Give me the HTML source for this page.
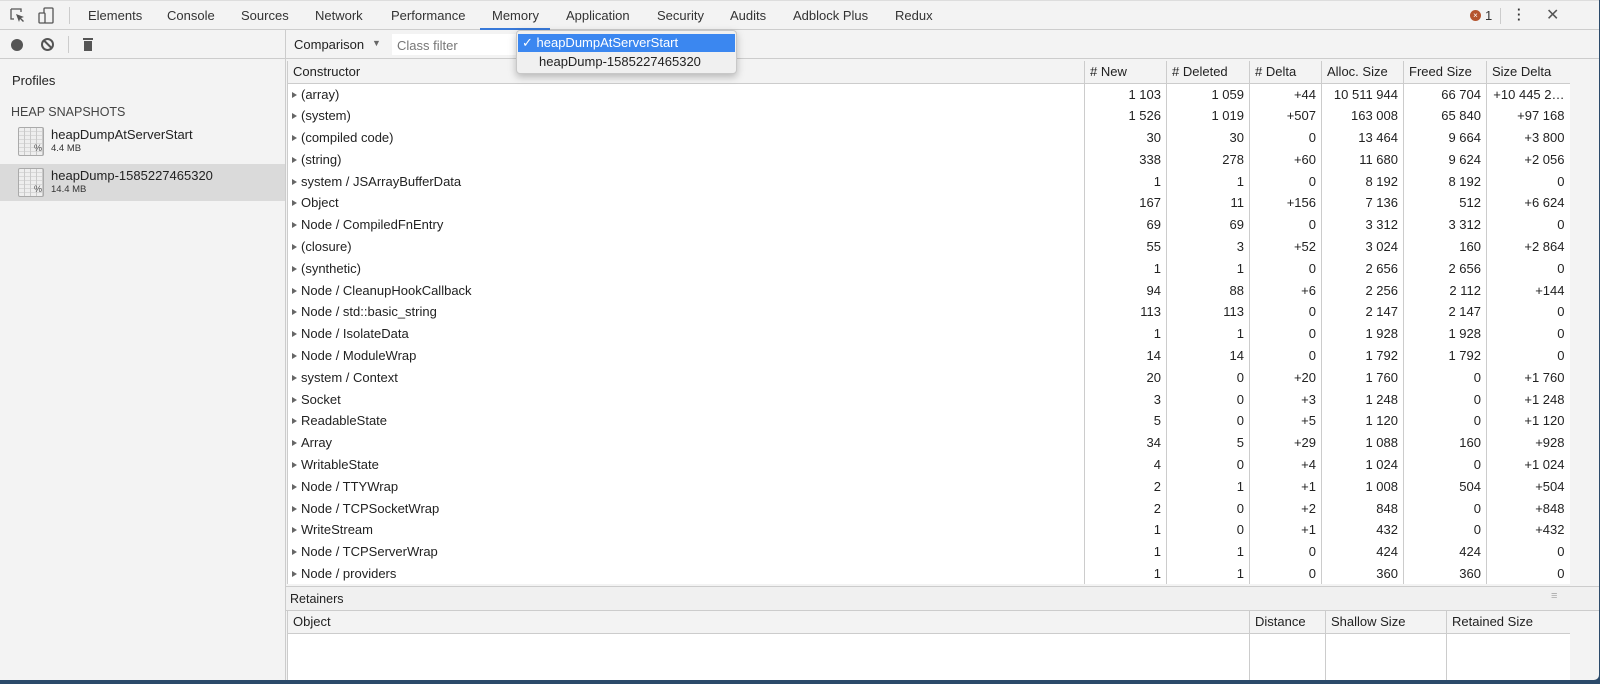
<!DOCTYPE html>
<html><head><style>
*{box-sizing:border-box;margin:0;padding:0}
body{width:1600px;height:684px;background:#2b4a6a;font-family:"Liberation Sans",sans-serif;font-size:13px;color:#222;position:relative;overflow:hidden}
.win{position:absolute;left:0;top:0;width:1599px;height:680px;background:#f3f3f3;border-bottom-right-radius:5px;overflow:hidden}
.tb{position:absolute;left:0;top:0;width:100%;height:30px;background:#f3f3f3;border-bottom:1px solid #cdcdcd;border-top:1px solid #ddd}
.tab{position:absolute;top:7px;font-size:13px;color:#333}
.sb{position:absolute;left:0;top:30px;width:286px;height:650px;background:#f3f3f3;border-right:1px solid #ccc}
.t2{position:absolute;left:0;top:0;width:286px;height:29px;border-bottom:1px solid #ccc}
.main{position:absolute;left:286px;top:30px;width:1313px;height:650px}
table{border-collapse:collapse;table-layout:fixed;position:absolute;left:1px;background:#fff}
td,th{border-left:1px solid #ccc;padding:0 5px;white-space:nowrap;overflow:hidden;font-weight:normal;font-size:13px}
th{background:#f3f3f3;text-align:left;height:22px;border-bottom:1px solid #ccc}
td{height:21.8px;text-align:right}
td:first-child{text-align:left;padding-left:4px}
.tri{display:inline-block;width:0;height:0;border-left:5px solid #666;border-top:3.5px solid transparent;border-bottom:3.5px solid transparent;margin-right:4px;vertical-align:1px}
.ic{position:absolute;left:18px;width:26px;height:29px;background:repeating-linear-gradient(90deg,transparent 0 5px,#c9c9c9 5px 6px),repeating-linear-gradient(0deg,#eee 0 3px,#d8d8d8 3px 4px);border:1px solid #aaa;border-radius:2px;font-size:9px;color:#555;text-align:right;padding:15px 1px 0 0}
</style></head><body>
<div class="win">
<div class="tb">
<svg style="position:absolute;left:10px;top:7px" width="16" height="16"><path d="M1 1h10v3M1 1v10h3" stroke="#555" fill="none" stroke-width="1.3"/><path d="M6 6l8 3-3 1 3 3-1 1-3-3-1 3z" fill="#555"/></svg>
<svg style="position:absolute;left:38px;top:6px" width="18" height="18"><rect x="6" y="1" width="9" height="15" rx="1" stroke="#555" fill="none" stroke-width="1.3"/><rect x="1" y="6" width="6" height="10" rx="1" stroke="#555" fill="#f3f3f3" stroke-width="1.3"/></svg>
<div style="position:absolute;left:69px;top:6px;width:1px;height:17px;background:#ccc"></div>
<span class="tab" style="left:88px">Elements</span><span class="tab" style="left:167px">Console</span><span class="tab" style="left:241px">Sources</span><span class="tab" style="left:315px">Network</span><span class="tab" style="left:391px">Performance</span><span class="tab" style="left:492px">Memory</span><span class="tab" style="left:566px">Application</span><span class="tab" style="left:657px">Security</span><span class="tab" style="left:730px">Audits</span><span class="tab" style="left:793px">Adblock Plus</span><span class="tab" style="left:895px">Redux</span>
<div style="position:absolute;left:480px;top:27px;width:70px;height:2px;background:#3879d9"></div>
<div style="position:absolute;left:1470px;top:9px;width:11px;height:11px;border-radius:50%;background:#b5552f;color:#fff;font-size:8px;text-align:center;line-height:11px">×</div>
<span class="tab" style="left:1485px">1</span>
<div style="position:absolute;left:1500px;top:7px;width:1px;height:16px;background:#ccc"></div>
<span class="tab" style="left:1517px;font-weight:bold;line-height:5px;top:6px">·<br>·<br>·</span>
<span class="tab" style="left:1546px;font-size:16px;top:4px;color:#555">✕</span>
</div>
<div class="sb">
<div class="t2">
<div style="position:absolute;left:11px;top:9px;width:12px;height:12px;border-radius:50%;background:#555"></div>
<div style="position:absolute;left:41px;top:8px;width:13px;height:13px;border-radius:50%;border:2px solid #555"><div style="position:absolute;left:3.5px;top:-1px;width:2px;height:11px;background:#555;transform:rotate(-45deg)"></div></div>
<div style="position:absolute;left:68px;top:6px;width:1px;height:17px;background:#ccc"></div>
<div style="position:absolute;left:83px;top:8px;width:10px;height:2px;background:#555"></div>
<div style="position:absolute;left:84px;top:11px;width:8px;height:10px;background:#555"></div>
</div>
<div style="position:absolute;left:12px;top:43px;font-size:13px">Profiles</div>
<div style="position:absolute;left:11px;top:75px;font-size:12.5px;color:#444">HEAP SNAPSHOTS</div>
<div style="position:absolute;left:0;top:134px;width:285px;height:37px;background:#dadada"></div>
<div class="ic" style="top:97px">%</div>
<div style="position:absolute;left:51px;top:97px;font-size:13px">heapDumpAtServerStart</div>
<div style="position:absolute;left:51px;top:113px;font-size:9.5px;color:#333">4.4 MB</div>
<div class="ic" style="top:138px">%</div>
<div style="position:absolute;left:51px;top:138px;font-size:13px">heapDump-1585227465320</div>
<div style="position:absolute;left:51px;top:154px;font-size:9.5px;color:#333">14.4 MB</div>
</div>
<div class="main">
<div style="position:absolute;left:0;top:0;width:1313px;height:29px;border-bottom:1px solid #ccc"></div>
<span style="position:absolute;left:8px;top:7px;font-size:13px">Comparison</span>
<span style="position:absolute;left:86px;top:8px;font-size:9px;color:#666">▼</span>
<div style="position:absolute;left:106px;top:4px;width:130px;height:21px;background:#fff"></div>
<span style="position:absolute;left:111px;top:8px;font-size:13px;color:#777">Class filter</span>
<table style="top:31px;width:1282px">
<colgroup><col style="width:797px"><col style="width:82px"><col style="width:83px"><col style="width:72px"><col style="width:82px"><col style="width:83px"><col style="width:83px"></colgroup>
<tr><th>Constructor</th><th># New</th><th># Deleted</th><th># Delta</th><th>Alloc. Size</th><th>Freed Size</th><th>Size Delta</th></tr>
<tr><td><i class="tri"></i>(array)</td><td>1 103</td><td>1 059</td><td>+44</td><td>10 511 944</td><td>66 704</td><td>+10 445 2…</td></tr>
<tr><td><i class="tri"></i>(system)</td><td>1 526</td><td>1 019</td><td>+507</td><td>163 008</td><td>65 840</td><td>+97 168</td></tr>
<tr><td><i class="tri"></i>(compiled code)</td><td>30</td><td>30</td><td>0</td><td>13 464</td><td>9 664</td><td>+3 800</td></tr>
<tr><td><i class="tri"></i>(string)</td><td>338</td><td>278</td><td>+60</td><td>11 680</td><td>9 624</td><td>+2 056</td></tr>
<tr><td><i class="tri"></i>system / JSArrayBufferData</td><td>1</td><td>1</td><td>0</td><td>8 192</td><td>8 192</td><td>0</td></tr>
<tr><td><i class="tri"></i>Object</td><td>167</td><td>11</td><td>+156</td><td>7 136</td><td>512</td><td>+6 624</td></tr>
<tr><td><i class="tri"></i>Node / CompiledFnEntry</td><td>69</td><td>69</td><td>0</td><td>3 312</td><td>3 312</td><td>0</td></tr>
<tr><td><i class="tri"></i>(closure)</td><td>55</td><td>3</td><td>+52</td><td>3 024</td><td>160</td><td>+2 864</td></tr>
<tr><td><i class="tri"></i>(synthetic)</td><td>1</td><td>1</td><td>0</td><td>2 656</td><td>2 656</td><td>0</td></tr>
<tr><td><i class="tri"></i>Node / CleanupHookCallback</td><td>94</td><td>88</td><td>+6</td><td>2 256</td><td>2 112</td><td>+144</td></tr>
<tr><td><i class="tri"></i>Node / std::basic_string</td><td>113</td><td>113</td><td>0</td><td>2 147</td><td>2 147</td><td>0</td></tr>
<tr><td><i class="tri"></i>Node / IsolateData</td><td>1</td><td>1</td><td>0</td><td>1 928</td><td>1 928</td><td>0</td></tr>
<tr><td><i class="tri"></i>Node / ModuleWrap</td><td>14</td><td>14</td><td>0</td><td>1 792</td><td>1 792</td><td>0</td></tr>
<tr><td><i class="tri"></i>system / Context</td><td>20</td><td>0</td><td>+20</td><td>1 760</td><td>0</td><td>+1 760</td></tr>
<tr><td><i class="tri"></i>Socket</td><td>3</td><td>0</td><td>+3</td><td>1 248</td><td>0</td><td>+1 248</td></tr>
<tr><td><i class="tri"></i>ReadableState</td><td>5</td><td>0</td><td>+5</td><td>1 120</td><td>0</td><td>+1 120</td></tr>
<tr><td><i class="tri"></i>Array</td><td>34</td><td>5</td><td>+29</td><td>1 088</td><td>160</td><td>+928</td></tr>
<tr><td><i class="tri"></i>WritableState</td><td>4</td><td>0</td><td>+4</td><td>1 024</td><td>0</td><td>+1 024</td></tr>
<tr><td><i class="tri"></i>Node / TTYWrap</td><td>2</td><td>1</td><td>+1</td><td>1 008</td><td>504</td><td>+504</td></tr>
<tr><td><i class="tri"></i>Node / TCPSocketWrap</td><td>2</td><td>0</td><td>+2</td><td>848</td><td>0</td><td>+848</td></tr>
<tr><td><i class="tri"></i>WriteStream</td><td>1</td><td>0</td><td>+1</td><td>432</td><td>0</td><td>+432</td></tr>
<tr><td><i class="tri"></i>Node / TCPServerWrap</td><td>1</td><td>1</td><td>0</td><td>424</td><td>424</td><td>0</td></tr>
<tr><td><i class="tri"></i>Node / providers</td><td>1</td><td>1</td><td>0</td><td>360</td><td>360</td><td>0</td></tr>
</table>
<div style="position:absolute;left:0;top:556px;width:1313px;height:25px;background:#f0f0f0;border-top:1px solid #ccc;border-bottom:1px solid #ccc"></div>
<span style="position:absolute;left:4px;top:562px;font-size:12.5px">Retainers</span>
<span style="position:absolute;left:1265px;top:560px;font-size:11px;color:#aaa">≡</span>
<table style="top:581px;width:1282px;height:69px">
<colgroup><col style="width:962px"><col style="width:76px"><col style="width:121px"><col style="width:123px"></colgroup>
<tr><th>Object</th><th>Distance</th><th>Shallow Size</th><th>Retained Size</th></tr>
<tr><td style="height:46px"></td><td></td><td></td><td></td></tr>
</table>
</div>
<div style="position:absolute;left:516px;top:30px;width:221px;height:44px;background:#f0f0f0;border:1px solid #c8c8c8;border-radius:4px;box-shadow:0 3px 8px rgba(0,0,0,.25)">
<div style="position:absolute;left:1px;top:3px;width:217px;height:18px;background:#3b87f0"></div>
<span style="position:absolute;left:5px;top:4px;color:#fff;font-size:13px">✓ heapDumpAtServerStart</span>
<span style="position:absolute;left:22px;top:23px;font-size:13px">heapDump-1585227465320</span>
</div>
</div>
</body></html>
